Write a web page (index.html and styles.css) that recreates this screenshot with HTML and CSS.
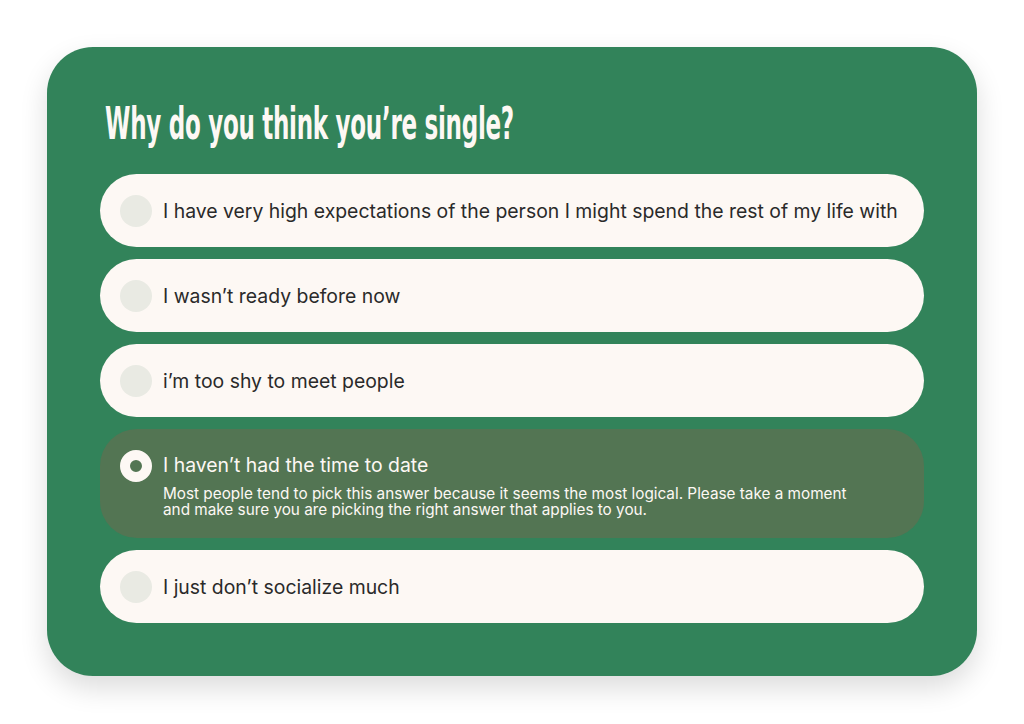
FILE: index.html
```html
<!DOCTYPE html>
<html lang="en">
<head>
    <meta charset="UTF-8">
    <meta name="viewport" content="width=device-width, initial-scale=1.0">
    <title>Why do you think you're single?</title>
    <link rel="stylesheet" href="styles.css">
</head>
<body>
    <div class="card">
        <h1 class="title">Why do you think you’re single?</h1>

        <div class="options">
            <label class="option">
                <span class="radio"></span>
                <span class="option-text">I have very high expectations of the person I might spend the rest of my life with</span>
            </label>
            <label class="option">
                <span class="radio"></span>
                <span class="option-text">I wasn’t ready before now</span>
            </label>
            <label class="option">
                <span class="radio"></span>
                <span class="option-text">i’m too shy to meet people</span>
            </label>
            <label class="option selected">
                <span class="radio"></span>
                <span class="option-body">
                    <span class="option-text">I haven’t had the time to date</span>
                    <span class="option-note">Most people tend to pick this answer because it seems the most logical. Please take a moment and make sure you are picking the right answer that applies to you.</span>
                </span>
            </label>
            <label class="option">
                <span class="radio"></span>
                <span class="option-text">I just don’t socialize much</span>
            </label>
        </div>
    </div>
</body>
</html>
```

FILE: styles.css
```css
* {
    margin: 0;
    padding: 0;
    box-sizing: border-box;
}

body {
    background-color: #ffffff;
    padding: 47px;
    font-family: Inter, 'Noto Sans', sans-serif;
}

.card {
    background-color: #32835a;
    border-radius: 46px;
    padding: 53px 53px 53px;
    box-shadow: 0 12px 28px rgba(0, 0, 0, 0.14);
}

.title {
    display: inline-block;
    font-family: 'DejaVu Sans Condensed', 'DejaVu Sans', sans-serif;
    font-weight: 700;
    font-size: 44px;
    line-height: 48px;
    color: #fdf8f4;
    margin-left: 5px;
    margin-bottom: 26px;
    letter-spacing: -0.5px;
    white-space: nowrap;
    transform: scaleX(0.582);
    transform-origin: left center;
}

.options {
    display: flex;
    flex-direction: column;
    gap: 12px;
}

.option {
    display: flex;
    align-items: center;
    gap: 11px;
    height: 73px;
    padding: 0 20px;
    border-radius: 37px;
    background-color: #fdf8f4;
    cursor: pointer;
}

.radio {
    flex: none;
    width: 32px;
    height: 32px;
    border-radius: 50%;
    background-color: #e9eae3;
}

.option-text {
    font-size: 19.4px;
    line-height: 24px;
    color: #2a2a2a;
}

.option.selected {
    height: 109px;
    align-items: flex-start;
    background-color: #537553;
    padding-top: 21px;
}

.option.selected .radio {
    background-color: #537553;
    border: 10px solid #fdf8f4;
}

.option-body {
    display: flex;
    flex-direction: column;
    gap: 9px;
    padding-top: 3px;
}

.option.selected .option-text {
    color: #fdf8f4;
}

.option-note {
    max-width: 700px;
    font-size: 15.3px;
    line-height: 16px;
    color: #fdf8f4;
}
```
